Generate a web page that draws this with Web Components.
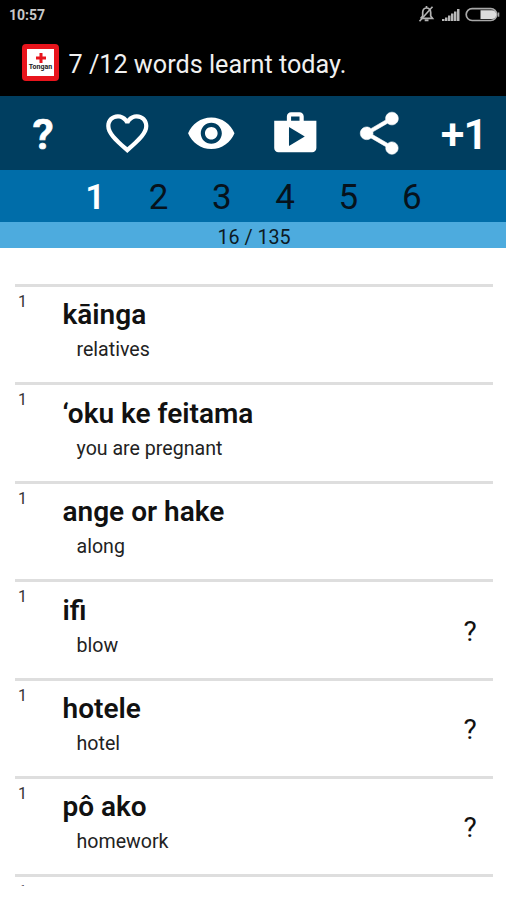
<!DOCTYPE html>
<html lang="en">
<head>
<meta charset="utf-8">
<title>Tongan</title>
<style>
body {
  margin: 0;
  background: #fff;
  font-family: Roboto, "Liberation Sans", sans-serif;
}
</style>
</head>
<body>
<vocab-app></vocab-app>

<script>
function define(name, html, setup) {
  const template = document.createElement("template");
  template.innerHTML = html;

  customElements.define(name, class extends HTMLElement {
    constructor() {
      super();
      this.attachShadow({ mode: "open" });
      this.shadowRoot.appendChild(template.content.cloneNode(true));
    }

    connectedCallback() {
      if (setup) setup(this, this.shadowRoot);
    }
  });
}

define("status-bar", `\
<style>
:host {
  display: flex;
  align-items: center;
  justify-content: space-between;
  box-sizing: border-box;
  height: 30px;
  padding: 0 6px 0 9px;
  color: #c8c8c8;
  font-size: 14px;
  font-weight: 700;
}
svg { display: block; }
</style>
<span>10:57</span>
<svg width="82" height="18" viewBox="418 6 82 18">
  <g fill="none" stroke="#b4b4b4" stroke-width="1.7">
    <path d="M421 18.5V18l1.7-2v-3.500c0-2.700 1.500-4.300 3.700-4.500s4.300 1.800 4.300 4.500V16l1.800 2.300H421zM426.500 6v2M424.700 20.300h3.800"/>
    <path d="M419.500 21.300L432.500 6.800" stroke-width="1.600"/>
  </g>
  <path fill="#b8b8b8" d="M442 19h2.500v2h-2.500zM445 17.500h2.500V21h-2.500zM448 15.500h2.500V21h-2.500zM451 13.500h2.500V21h-2.500zM454 11.500h2.500V21h-2.500zM457 9h2.500v12H457z"/>
  <rect x="466.200" y="8.700" width="30.500" height="11.800" rx="5.900" fill="#000" stroke="#a8a8a8" stroke-width="1.700"/>
  <path d="M480.500 10.300H492a4.200 4.200 0 0 1 0 8.600h-11.500z" fill="#dcdcdc"/>
  <path d="M498.500 12.500v4.200" stroke="#a8a8a8" stroke-width="1.600"/>
</svg>
`);

define("title-bar", `\
<style>
:host {
  display: flex;
  align-items: center;
  gap: 10px;
  box-sizing: border-box;
  height: 66px;
  padding: 0 22px 1px;
  color: #f0f0f0;
  font-size: 25.200px;
}
.logo {
  display: flex;
  flex-direction: column;
  align-items: center;
  box-sizing: border-box;
  width: 37px;
  height: 37px;
  padding-top: 4px;
  border: 5px solid #e8141c;
  border-radius: 4px;
  background: #fff;
  color: #222;
  font-size: 7px;
  font-weight: 700;
  line-height: 9px;
}
.logo svg { display: block; }
.title {
  padding-top: 3px;
  margin-left: -0.500px;
}
</style>
<div class="logo">
  <svg width="10" height="10"><path d="M5 0v10M0 5h10" stroke="#e8141c" stroke-width="3"/></svg>
  <span>Tongan</span>
</div>
<span class="title"><slot></slot></span>
`);

define("tool-bar", `\
<style>
:host {
  display: grid;
  grid-template-columns: repeat(6, 1fr);
  place-items: center;
  box-sizing: border-box;
  height: 73.500px;
  padding: 1.500px 0 0 1px;
  background: #003e60;
  color: #fff;
  font-weight: 700;
  font-size: 43px;
}
svg {
  display: block;
  width: 50.600px;
  height: 50.600px;
  fill: currentColor;
}
.help {
  font-size: 43px;
  font-weight: 600;
  -webkit-text-stroke: 0.700px #fff;
}
.plus {
  font-weight: 600;
  letter-spacing: -1px;
}
</style>
<span class="help">?</span>
<svg viewBox="0 0 24 24"><path d="M16.500 3c-1.740 0-3.410.81-4.500 2.090C10.910 3.810 9.240 3 7.500 3 4.420 3 2 5.420 2 8.500c0 3.780 3.400 6.860 8.550 11.540L12 21.350l1.450-1.320C18.600 15.360 22 12.280 22 8.500 22 5.420 19.580 3 16.500 3zm-4.400 15.550l-.1.100-.1-.1C7.140 14.240 4 11.390 4 8.500 4 6.500 5.500 5 7.500 5c1.540 0 3.040.99 3.570 2.360h1.870C13.460 5.990 14.960 5 16.500 5c2 0 3.500 1.500 3.500 3.500 0 2.890-3.140 5.740-7.900 10.050z"/></svg>
<svg viewBox="0 0 24 24"><path d="M12 4.500C7 4.500 2.730 7.610 1 12c1.730 4.390 6 7.500 11 7.500s9.270-3.110 11-7.500c-1.730-4.390-6-7.500-11-7.500zM12 17c-2.760 0-5-2.240-5-5s2.240-5 5-5 5 2.240 5 5-2.240 5-5 5zm0-8c-1.660 0-3 1.340-3 3s1.340 3 3 3 3-1.340 3-3-1.340-3-3-3z"/></svg>
<svg viewBox="0 0 24 24"><path d="M16 6V4c0-1.110-.89-2-2-2h-4c-1.110 0-2 .89-2 2v2H2v13c0 1.110.89 2 2 2h16c1.110 0 2-.89 2-2V6h-6zm-6-2h4v2h-4V4zM9 18V9l7.500 4.500L9 18z"/></svg>
<svg viewBox="0 0 24 24"><path d="M18 16.080c-.76 0-1.440.3-1.960.77L8.910 12.700c.05-.23.090-.46.090-.7s-.04-.47-.09-.7l7.050-4.110c.54.500 1.250.81 2.040.81 1.660 0 3-1.340 3-3s-1.340-3-3-3-3 1.340-3 3c0 .24.040.47.090.7L8.040 9.810C7.500 9.310 6.790 9 6 9c-1.660 0-3 1.340-3 3s1.340 3 3 3c.79 0 1.500-.31 2.040-.81l7.120 4.160c-.05.21-.08.43-.08.65 0 1.610 1.310 2.920 2.920 2.920s2.920-1.310 2.920-2.920-1.310-2.920-2.920-2.920z" stroke="currentColor" stroke-width=".3"/></svg>
<span class="plus">+1</span>
`);

define("level-tabs", `\
<style>
:host {
  display: flex;
  align-items: center;
  justify-content: center;
  box-sizing: border-box;
  height: 52.500px;
  padding: 4px 0 0 1px;
  background: #006da9;
  color: #06121c;
  font-size: 35px;
}
span {
  width: 63.300px;
  text-align: center;
}
.active {
  color: #fff;
  font-weight: 600;
}
</style>
`, (host, root) => {
  const count = Number(host.getAttribute("count"));
  for (let i = 1; i <= count; i++) {
    const tab = document.createElement("span");
    tab.textContent = i;
    tab.classList.toggle("active", i === Number(host.getAttribute("active")));
    root.appendChild(tab);
  }
});

define("progress-strip", `\
<style>
:host {
  display: flex;
  align-items: center;
  justify-content: center;
  height: 26px;
  padding: 4px 0 0 2px;
  box-sizing: border-box;
  background: #4dabde;
  color: #0c1a24;
  font-size: 19.700px;
}
</style>
<slot></slot>
`);

define("word-row", `\
<style>
:host {
  display: grid;
  grid-template-columns: 47.500px 1fr 46px;
  box-sizing: border-box;
  height: 98.400px;
  border-top: 3px solid #dedede;
  color: #111;
}
.level {
  padding: 5px 0 0 3px;
  color: #333;
  font-size: 16px;
  line-height: 20px;
}
.word {
  padding-top: 11.400px;
  font-size: 28px;
  font-weight: 600;
  line-height: 34px;
}
.meaning {
  padding: 6px 0 0 14px;
  color: #222;
  font-size: 19.600px;
  line-height: 24px;
}
.mark {
  padding-top: 33.500px;
  text-align: center;
  font-size: 28px;
  line-height: 32px;
}
</style>
<div class="level">1</div>
<div>
  <div class="word"><slot></slot></div>
  <div class="meaning"></div>
</div>
<div class="mark"></div>
`, (host, root) => {
  root.querySelector(".meaning").textContent = host.getAttribute("meaning");
  root.querySelector(".mark").textContent = host.hasAttribute("unknown") ? "?" : "";
});

define("word-list", `\
<style>
:host {
  display: block;
  box-sizing: border-box;
  height: 638px;
  padding: 36px 13px 0 15px;
  overflow: hidden; /* the last row only peeks in */
}
</style>
<slot></slot>
`);

define("vocab-app", `\
<style>
:host {
  display: block;
  height: 900px;
  overflow: hidden;
}
header { background: #000; }
</style>
<header>
  <status-bar></status-bar>
  <title-bar>7 /12 words learnt today.</title-bar>
</header>
<tool-bar></tool-bar>
<level-tabs count="6" active="1"></level-tabs>
<progress-strip>16 / 135</progress-strip>
<word-list>
  <word-row meaning="relatives">kāinga</word-row>
  <word-row meaning="you are pregnant">‘oku ke feitama</word-row>
  <word-row meaning="along">ange or hake</word-row>
  <word-row meaning="blow" unknown>ifi</word-row>
  <word-row meaning="hotel" unknown>hotele</word-row>
  <word-row meaning="homework" unknown>pô ako</word-row>
  <word-row></word-row>
</word-list>
`);
</script>
</body>
</html>
